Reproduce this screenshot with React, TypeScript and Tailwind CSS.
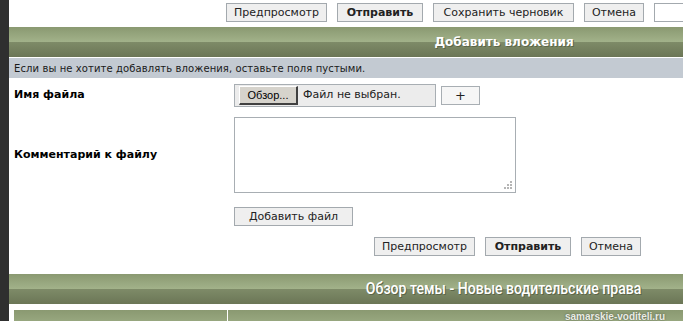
import React from "react";

const font = "font-['DejaVu_Sans','Verdana',sans-serif]";

function Btn({ label, bold, w }: { label: string; bold?: boolean; w: string }) {
  return (
    <button
      className={`${w} h-[19px] shrink-0 border border-[#a3a9ae] bg-[#efefef] text-[11px] leading-none text-[#222] ${
        bold ? "font-bold" : ""
      }`}
    >
      {label}
    </button>
  );
}

function HeaderBar({ title, narrow }: { title: string; narrow?: boolean }) {
  return (
    <div className="relative h-[30px] w-full">
      <div className="h-[15px] bg-gradient-to-b from-[#8a9971] to-[#a2b28a]" />
      <div className="h-[15px] bg-gradient-to-b from-[#7e8b68] to-[#6b7656]" />
      <div className="absolute inset-0 flex items-center justify-center text-white [text-shadow:1px_1px_0_#5b6548]">
        {narrow ? (
          <span className="inline-block scale-x-[0.88] font-['Roboto',sans-serif] text-[16px] font-medium">
            {title}
          </span>
        ) : (
          <span className="text-[12px] font-bold">{title}</span>
        )}
      </div>
    </div>
  );
}

export default function App() {
  return (
    <div className={`flex h-[321px] w-[683px] overflow-hidden bg-white ${font}`}>
      <div className="w-[9px] shrink-0 bg-[#2f2f2f]" />
      <div className="relative w-[990px] shrink-0">
        {/* top buttons */}
        <div className="flex gap-[10px] pl-[217px] pt-[3px]">
          <Btn label="Предпросмотр" w="w-[101px]" />
          <Btn label="Отправить" bold w="w-[86px]" />
          <Btn label="Сохранить черновик" w="w-[141px]" />
          <Btn label="Отмена" w="w-[60px]" />
          <div className="h-[19px] w-[132px] shrink-0 border border-[#a3a9ae] bg-white" />
        </div>

        <div className="mt-[5px]">
          <HeaderBar title="Добавить вложения" />
        </div>
        <div className="h-px bg-white" />
        <div className="flex h-[20px] items-center bg-[#c3cad2] pl-[5px] text-[10px] tracking-[0.1px] text-[#1a1a1a]">
          Если вы не хотите добавлять вложения, оставьте поля пустыми.
        </div>

        <div className="grid grid-cols-[220px_1fr] items-center gap-y-[10px] pl-[5px] pt-[6px] text-[11px] text-black">
          <div className="font-bold">Имя файла</div>
          <div className="flex items-center gap-[5px]">
            <div className="flex h-[23px] w-[202px] items-center border border-[#a8aeb3] bg-[#ececec] pl-[4px]">
              <div className="flex h-[19px] w-[59px] items-center justify-center border-t border-l border-t-white border-l-white border-r-[2px] border-b-[2px] border-r-[#404040] border-b-[#404040] bg-[#d6d3cc] font-['Liberation_Sans',sans-serif] text-[11px] text-black">
                Обзор...
              </div>
              <span className="pl-[5px] text-[11px] text-[#222]">Файл не выбран.</span>
            </div>
            <button className="h-[19px] w-[39px] border border-[#a8aeb3] bg-[#f6f6f6] text-[13px] leading-none text-[#222]">
              +
            </button>
          </div>

          <div className="font-bold">Комментарий к файлу</div>
          <div>
            <div className="relative h-[76px] w-[282px] border border-[#a8aeb3] bg-white">
              <svg className="absolute bottom-[3px] right-[3px]" width="9" height="9" viewBox="0 0 9 9">
                <rect x="7" y="1" width="2" height="2" fill="#b5b5b5" />
                <rect x="4" y="4" width="2" height="2" fill="#b5b5b5" />
                <rect x="7" y="4" width="2" height="2" fill="#b5b5b5" />
                <rect x="1" y="7" width="2" height="2" fill="#b5b5b5" />
                <rect x="4" y="7" width="2" height="2" fill="#b5b5b5" />
                <rect x="7" y="7" width="2" height="2" fill="#b5b5b5" />
              </svg>
            </div>
          </div>

          <div />
          <div className="pt-[4px]">
            <Btn label="Добавить файл" w="w-[119px]" />
          </div>
        </div>

        <div className="mt-[11px] flex gap-[10px] pl-[365px]">
          <Btn label="Предпросмотр" w="w-[101px]" />
          <Btn label="Отправить" bold w="w-[86px]" />
          <Btn label="Отмена" w="w-[60px]" />
        </div>

        <div className="mt-[18px]">
          <HeaderBar title="Обзор темы - Новые водительские права" narrow />
        </div>

        <div className="mt-[6px] flex h-[20px] pl-[5px]">
          <div className="w-[213px] bg-gradient-to-b from-[#8a9971] to-[#a2b28a]" />
          <div className="w-px bg-white" />
          <div className="flex-1 bg-gradient-to-b from-[#8a9971] to-[#a2b28a]" />
        </div>

        <div className="absolute left-[556px] top-[309px] font-['Liberation_Sans',sans-serif] text-[10px] font-bold text-[#e9ece4] [text-shadow:0_0_2px_#4a5240]">
          samarskie-voditeli.ru
        </div>
      </div>
    </div>
  );
}
